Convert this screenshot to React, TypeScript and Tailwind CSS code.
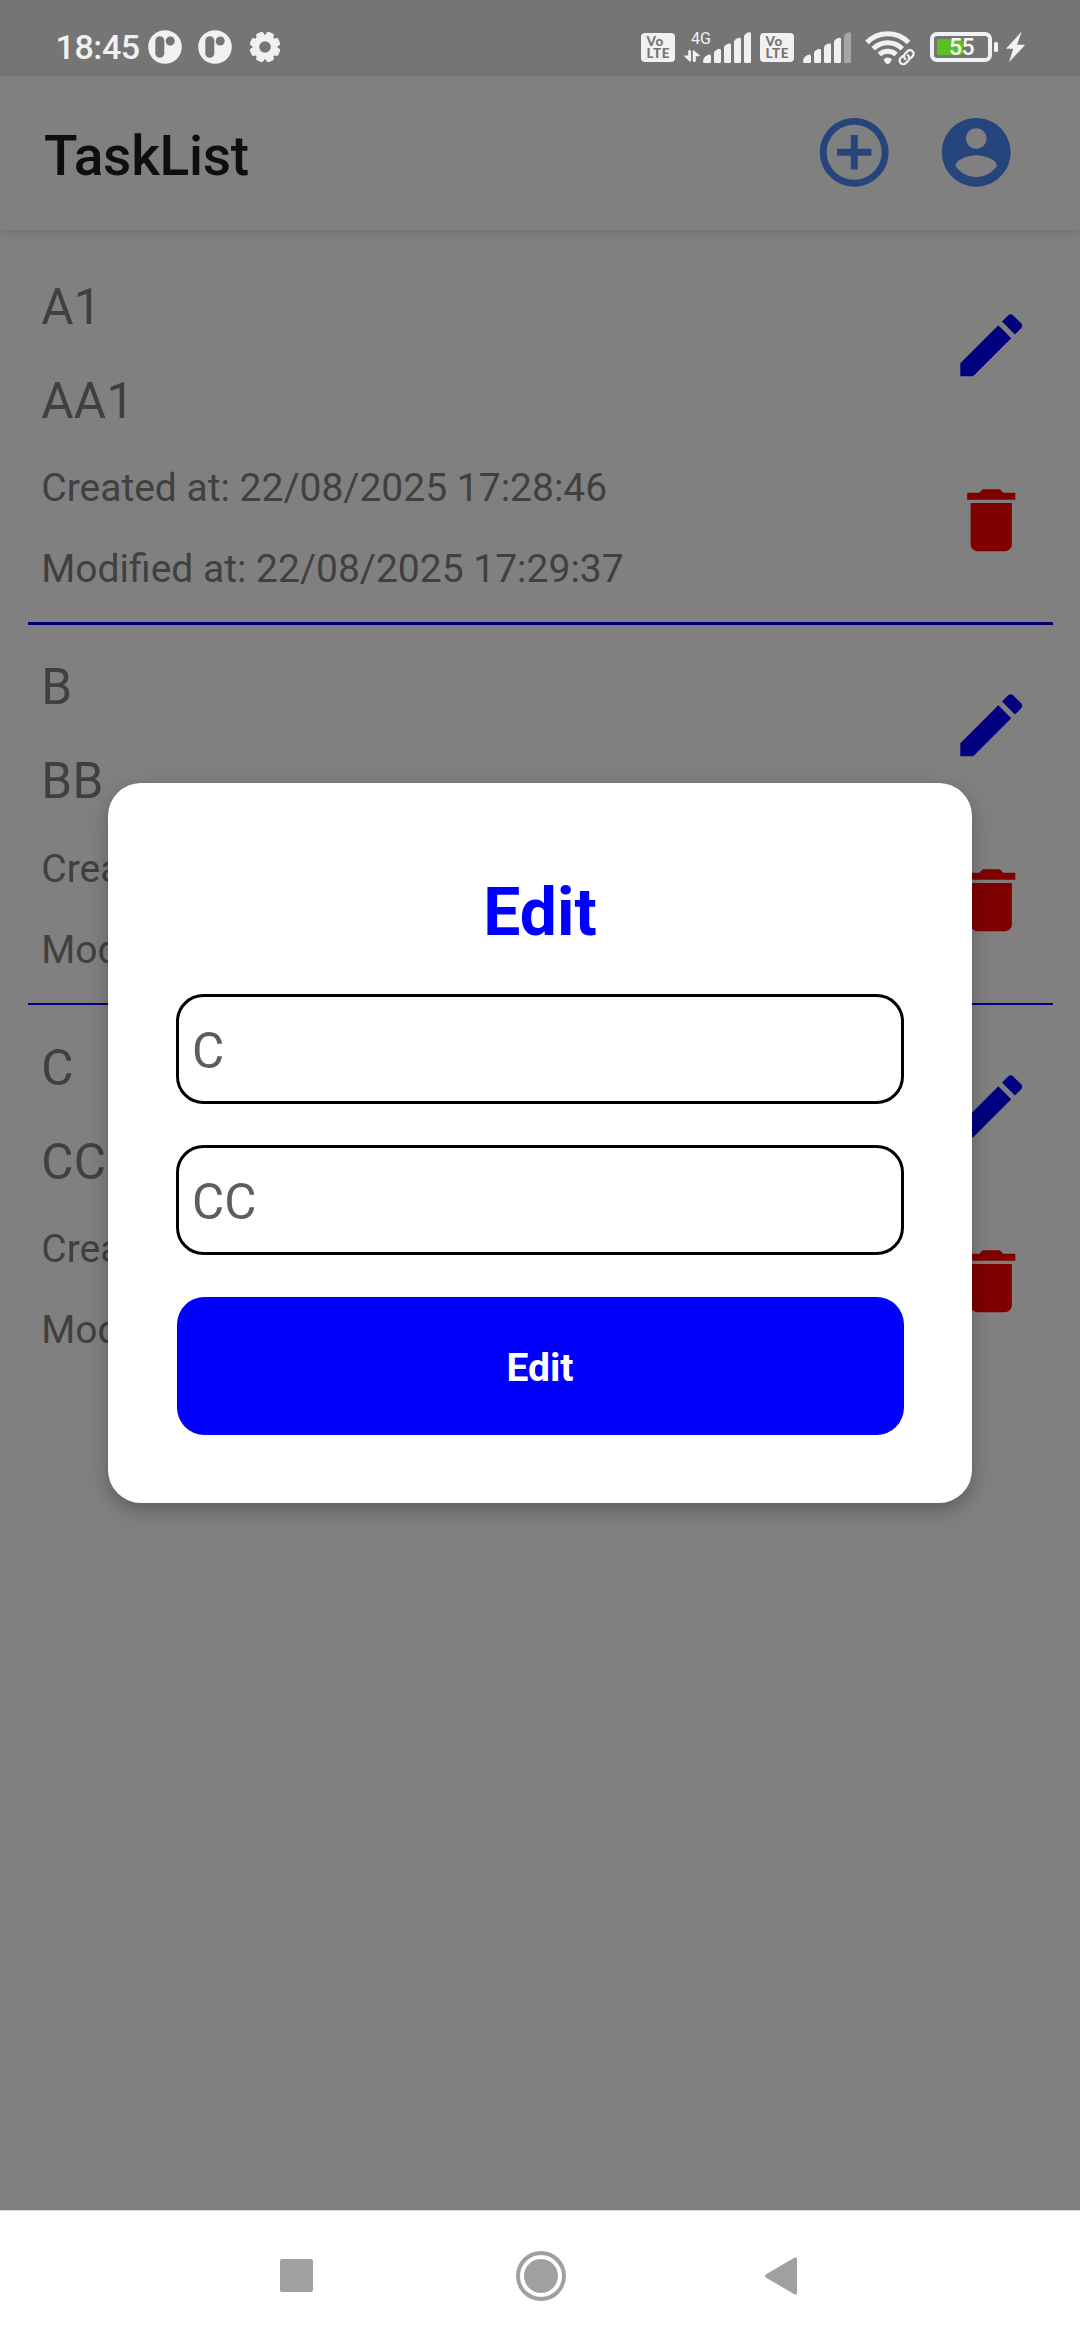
import React from 'react';

type Task = { title: string; body: string; created: string; modified: string };

const tasks: Task[] = [
  { title: 'A1', body: 'AA1', created: '22/08/2025 17:28:46', modified: '22/08/2025 17:29:37' },
  { title: 'B', body: 'BB', created: '', modified: '' },
  { title: 'C', body: 'CC', created: '', modified: '' },
];

function AppBadge({ className }: { className: string }) {
  return (
    <svg viewBox="0 0 34 34" className={`h-[34px] w-[34px] shrink-0 ${className}`}>
      <circle cx="17" cy="17" r="16.8" fill="#f1f1f1" />
      <rect x="7.3" y="6.3" width="9" height="21.4" rx="4.5" fill="#757575" />
      <circle cx="22.2" cy="11" r="4.5" fill="#757575" />
    </svg>
  );
}

function Gear() {
  return (
    <svg viewBox="-15 -15 30 30" className="ml-[18px] h-[30px] w-[30px] shrink-0">
      <g fill="#f1f1f1">
        {[22.5, 67.5, 112.5, 157.5].map((a) => (
          <rect key={a} x="-4" y="-15.4" width="8" height="30.8" rx="2.2" transform={`rotate(${a})`} />
        ))}
        <circle r="12.6" />
      </g>
      <circle r="5.8" fill="#757575" />
    </svg>
  );
}

function Volte({ className }: { className: string }) {
  return (
    <div
      className={`flex h-[29px] w-[34px] shrink-0 flex-col rounded-[4px] bg-[#f1f1f1] pt-[2px] pl-[5.5px] font-['Lato'] text-[13.5px] leading-[12.3px] font-black tracking-[0.6px] text-[#757575] ${className}`}
    >
      <span>Vo</span>
      <span>LTE</span>
    </div>
  );
}

function Bars({ dimLast, className }: { dimLast?: boolean; className: string }) {
  return (
    <svg viewBox="0 0 48 31" className={`h-[31px] w-[48px] shrink-0 ${className}`} fill="#f1f1f1">
      <path d="M0 29.5C0 25.5 4 22.6 6.6 22.6Q8 22.6 8 24V29.5Q8 31 6.5 31H1.5Q0 31 0 29.5Z" />
      <path d="M11 21C11 19 14.5 17 16.6 17Q18 17 18 18.4V29.5Q18 31 16.5 31H12.5Q11 31 11 29.5Z" />
      <path d="M21 15.5C21 13.5 24.5 11.6 26.6 11.6Q28 11.6 28 13V29.5Q28 31 26.5 31H22.5Q21 31 21 29.5Z" />
      <path d="M31 10C31 8 34.5 5.8 36.6 5.8Q38 5.8 38 7.2V29.5Q38 31 36.5 31H32.5Q31 31 31 29.5Z" />
      <path
        d="M41 4.5C41 2.5 44.5 .2 46.6 .2Q48 .2 48 1.6V29.5Q48 31 46.5 31H42.5Q41 31 41 29.5Z"
        fill={dimLast ? '#a6a6a6' : '#f1f1f1'}
      />
    </svg>
  );
}

function MobileData() {
  return (
    <div className="ml-[8px] flex h-[34px] w-[20px] shrink-0 flex-col">
      <span className="ml-[8px] h-[19px] text-[16px] leading-[15px] whitespace-nowrap text-[#f1f1f1]">4G</span>
      <svg viewBox="0 0 18 12" className="ml-[1px] h-[12px] w-[18px]" fill="#f1f1f1">
        <path d="M4.2 1.2Q4.2 0 5.6 0T7 1.2V10.6Q7 12 5.7 11.4L.3 6.4Q0 5.6 1 5.6H4.2Z" />
        <path d="M8.8 1Q8.8-.3 10 .5L15.7 5.3Q16 6.2 15 6.2H11.8V10.8Q11.8 12 10.3 12T8.8 10.8Z" />
      </svg>
    </div>
  );
}

function Wifi() {
  return (
    <svg viewBox="0 0 52 38" className="ml-[13px] h-[38px] w-[52px] shrink-0" fill="none" stroke="#f1f1f1">
      <path d="M3 14.5A29 29 0 0 1 44.5 14.5" strokeWidth="5" />
      <path d="M9.2 20.8A20.6 20.6 0 0 1 38.3 20.8" strokeWidth="5" />
      <path d="M15.3 26.5A12.6 12.6 0 0 1 32.2 26.5" strokeWidth="5" />
      <path d="M19.4 31.5Q23.7 27.5 28 31.5L26 34.8Q23.7 37.2 21.4 34.8Z" fill="#f1f1f1" stroke="none" />
      <g transform="translate(42.6 29.2) rotate(-45)">
        <rect x="-11" y="-6.5" width="22" height="13" rx="6.5" fill="#757575" stroke="none" />
        <path
          d="M-2 -3.6H-4.8A3.6 3.6 0 0 0 -4.8 3.6H-1A3.6 3.6 0 0 0 2.2 -.6M2 3.6H4.8A3.6 3.6 0 0 0 4.8 -3.6H1A3.6 3.6 0 0 0 -2.2 .6"
          strokeWidth="2.2"
          strokeLinecap="round"
        />
      </g>
    </svg>
  );
}

function Battery() {
  return (
    <div className="ml-[14px] flex shrink-0 items-center">
      <div className="flex h-[30px] w-[62px] items-center rounded-[7px] border-4 border-[#f1f1f1] pl-[3px]">
        <div className="h-[16px] w-[26px] shrink-0 rounded-[2px] bg-[#5abf20]" />
        <span className="-ml-[14px] pt-[2px] text-[23px] leading-[22px] font-medium tracking-[-0.5px] text-[#f8f8f8]">55</span>
      </div>
      <div className="ml-[2px] h-[10px] w-[4px] rounded-[1.5px] bg-[#f1f1f1]" />
      <svg viewBox="0 0 19 30" className="ml-[8px] h-[30px] w-[19px]" fill="#f1f1f1">
        <path d="M15.5.3Q15.6-.2 15.1.3L.3 16.2Q0 16.8.6 16.8H7.2L3.2 29.6Q3.2 30 3.7 29.6L18.6 13.4Q19 12.7 18.3 12.7H11Z" />
      </svg>
    </div>
  );
}

function StatusBar() {
  return (
    <div className="flex h-[76px] shrink-0 items-start bg-[#757575] pt-[10px]">
      <span className="mt-[15px] ml-[55.5px] w-[92.5px] shrink-0 text-[34px] leading-[44px] font-medium tracking-[-0.4px] text-[#f1f1f1]">
        18:45
      </span>
      <AppBadge className="mt-[20px]" />
      <AppBadge className="mt-[20px] ml-[16px]" />
      <div className="mt-[22px]">
        <Gear />
      </div>
      <Volte className="mt-[23px] ml-[361px]" />
      <div className="mt-[21px]">
        <MobileData />
      </div>
      <Bars className="mt-[22px]" />
      <Volte className="mt-[23px] ml-[9px]" />
      <Bars className="mt-[22px] ml-[9px]" dimLast />
      <div className="mt-[18px]">
        <Wifi />
      </div>
      <div className="mt-[22px]">
        <Battery />
      </div>
    </div>
  );
}

function Icon({ d, className }: { d: string; className: string }) {
  return (
    <svg viewBox="0 0 24 24" fill="currentColor" className={`h-[82.5px] w-[82.5px] shrink-0 ${className}`}>
      <path d={d} />
    </svg>
  );
}

const ADD =
  'M13 7h-2v4H7v2h4v4h2v-4h4v-2h-4V7zm-1-5C6.48 2 2 6.48 2 12s4.48 10 10 10 10-4.48 10-10S17.52 2 12 2zm0 18c-4.41 0-8-3.59-8-8s3.59-8 8-8 8 3.59 8 8-3.59 8-8 8z';
const ACCOUNT =
  'M12 2C6.48 2 2 6.48 2 12s4.48 10 10 10 10-4.48 10-10S17.52 2 12 2zm0 3c1.66 0 3 1.34 3 3s-1.34 3-3 3-3-1.34-3-3 1.34-3 3-3zm0 14.2c-2.5 0-4.71-1.28-6-3.22.03-1.99 4-3.08 6-3.08 1.99 0 5.97 1.09 6 3.08-1.29 1.94-3.5 3.22-6 3.22z';
const EDIT =
  'M3 17.25V21h3.75L17.81 9.94l-3.75-3.75L3 17.25zM20.71 7.04c.39-.39.39-1.02 0-1.41l-2.34-2.34c-.39-.39-1.02-.39-1.41 0l-1.83 1.83 3.75 3.75 1.83-1.83z';
const TRASH = 'M6 19c0 1.1.9 2 2 2h8c1.1 0 2-.9 2-2V7H6v12zM19 4h-3.5l-1-1h-5l-1 1H5v2h14V4z';

function Header() {
  return (
    <header className="flex h-[154px] shrink-0 items-start bg-[#808080] pr-[63px] pl-[44px] shadow-[0_2px_8px_rgba(0,0,0,0.14)]">
      <h1 className="mt-[48px] grow text-[55px] leading-[64px] font-medium tracking-[-0.25px] text-[#0e0e0e]">TaskList</h1>
      <Icon d={ADD} className="mt-[35.2px] mr-[39.5px] text-[#25457c]" />
      <Icon d={ACCOUNT} className="mt-[35.2px] text-[#25457c]" />
    </header>
  );
}

function TaskRow({ task, line }: { task: Task; line: string }) {
  return (
    <li className={`flex h-[380.5px] shrink-0 justify-between pt-[33.5px] pr-[20px] pl-[13.75px] ${line}`}>
      <div className="flex flex-col gap-[36.1px] whitespace-nowrap text-[#404040]">
        <p className="text-[49.5px] leading-[58.25px]">{task.title}</p>
        <p className="text-[49.5px] leading-[58.25px] tracking-[0.3px]">{task.body}</p>
        <p className="text-[39px] leading-[45px]">Created at: {task.created}</p>
        <p className="text-[39px] leading-[45px]">Modified at: {task.modified}</p>
      </div>
      <div className="mt-[26.2px] flex flex-col gap-[92.8px]">
        <Icon d={EDIT} className="text-[#000080]" />
        <Icon d={TRASH} className="text-[#800000]" />
      </div>
    </li>
  );
}

function Field({ value, className }: { value: string; className: string }) {
  return (
    <div
      className={`flex h-[110px] items-center rounded-[27.5px] border-3 border-black px-[13px] pt-[6px] text-[49.5px] text-[#625b5b] ${className}`}
    >
      {value}
    </div>
  );
}

function EditDialog() {
  return (
    <div className="absolute inset-x-0 top-[783px] flex justify-center">
      <div className="flex h-[719.5px] w-[864px] flex-col rounded-[33px] bg-white px-[68px] pt-[90.5px] shadow-[0_7px_20px_rgba(0,0,0,0.28)]">
        <h2 className="text-center text-[66px] leading-[78px] font-bold text-[#0000ff]">Edit</h2>
        <Field value="C" className="mt-[42px]" />
        <Field value="CC" className="mt-[41px]" />
        <button className="mx-[0.5px] mt-[42px] h-[138px] rounded-[27.5px] bg-[#0000ff] pt-[5px] text-[39px] font-bold text-white">
          Edit
        </button>
      </div>
    </div>
  );
}

function NavBar() {
  return (
    <nav className="flex h-[130px] shrink-0 items-center border-t border-[#d8d8d8] bg-white pl-[279.5px]">
      <div className="h-[33px] w-[33px] rounded-[2px] bg-[#a0a0a0]" />
      <div className="ml-[203px] flex h-[50px] w-[50px] items-center justify-center rounded-full border-4 border-[#a0a0a0]">
        <div className="h-[34px] w-[34px] rounded-full bg-[#a0a0a0]" />
      </div>
      <svg viewBox="0 0 32 38" className="ml-[199px] h-[38px] w-[32px]" fill="#a0a0a0">
        <path d="M.7 17.6L29.3.8Q32-.4 32 2V36Q32 38.4 29.3 37.2L.7 20.4Q-.6 19 .7 17.6Z" />
      </svg>
    </nav>
  );
}

export default function App() {
  return (
    <div className="relative flex h-[2340px] w-[1080px] flex-col overflow-hidden bg-[#808080] font-['Roboto',sans-serif]">
      <StatusBar />
      <Header />
      <ul className="flex grow flex-col px-[27.5px] pt-[14px]">
        {tasks.map((t, i) => (
          <TaskRow
            key={t.title}
            task={t}
            line={i === 0 ? 'border-b-3 border-[#000070]' : i === 1 ? 'border-b-2 border-[#000080]' : ''}
          />
        ))}
      </ul>
      <NavBar />
      <EditDialog />
    </div>
  );
}
